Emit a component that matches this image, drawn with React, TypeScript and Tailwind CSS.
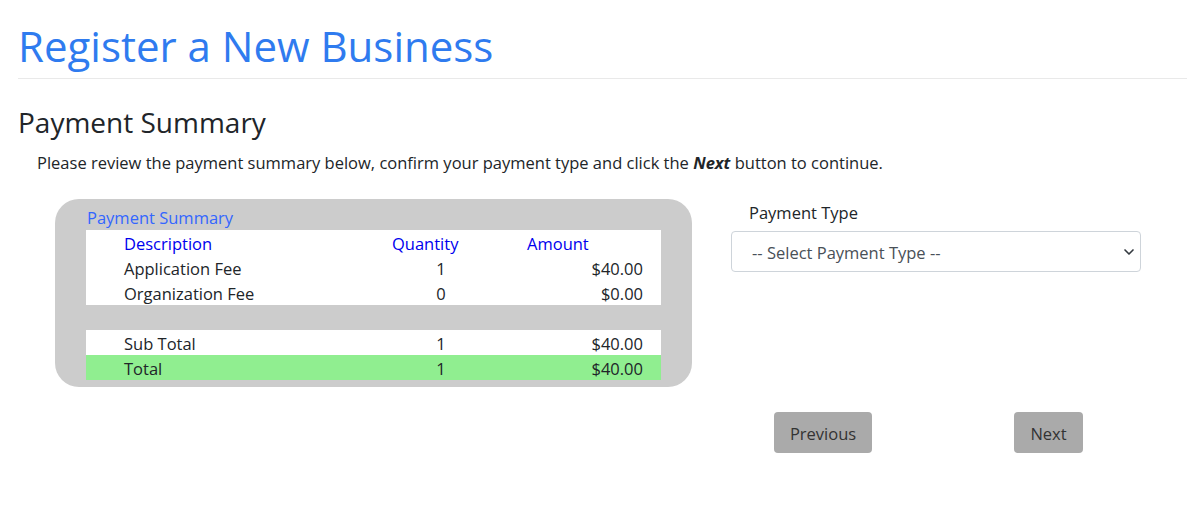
import { ChevronDown } from 'lucide-react';

type Line = { label: string; qty: string; amount: string };

const fees: Line[] = [
  { label: 'Application Fee', qty: '1', amount: '$40.00' },
  { label: 'Organization Fee', qty: '0', amount: '$0.00' },
];

function Row({ line, className = '' }: { line: Line; className?: string }) {
  return (
    <div className={`flex h-[25px] items-center pt-[3px] pl-[38px] ${className}`}>
      <span className="w-[268px]">{line.label}</span>
      <span className="w-[98px] text-center">{line.qty}</span>
      <span className="w-[37px]" />
      <span className="w-[116px] text-right">{line.amount}</span>
    </div>
  );
}

export default function App() {
  return (
    <div
      className="min-h-[516px] bg-white px-[18px] text-[16.5px] text-[#212529]"
      style={{ fontFamily: '"Open Sans", "Noto Sans", Arial, sans-serif' }}
    >
      <h1 className="pt-[22px] pb-[2px] text-[42px] leading-[48px] text-[#2f7bef]">Register a New Business</h1>
      <hr className="mt-[6px] -mr-[18px] border-t border-[#e9e9e9]" />

      <h2 className="mt-[26px] text-[28px] leading-[34px]">Payment Summary</h2>
      <p className="mt-[12px] pl-[19px] leading-[24px]">
        Please review the payment summary below, confirm your payment type and click the{' '}
        <b>
          <i>Next</i>
        </b>{' '}
        button to continue.
      </p>

      <div className="mt-[24px] flex items-start">
        <div className="ml-[37px] w-[637px] rounded-[24px] bg-[#cccccc] px-[31px] pt-[7px] pb-[7px]">
          <div className="pl-[1px] leading-[24px] text-[#3366ff]">Payment Summary</div>
          <div className="bg-white">
            <div className="flex h-[25px] items-center pt-[3px] pl-[38px] text-[#0000ee]">
              <span className="w-[268px]">Description</span>
              <span className="w-[135px]">Quantity</span>
              <span className="w-[116px]">Amount</span>
            </div>
            {fees.map((f) => (
              <Row key={f.label} line={f} />
            ))}
          </div>
          <div className="h-[25px]" />
          <Row line={{ label: 'Sub Total', qty: '1', amount: '$40.00' }} className="bg-white" />
          <Row line={{ label: 'Total', qty: '1', amount: '$40.00' }} className="bg-[#90ee90]" />
        </div>

        <div className="ml-[39px] w-[410px]">
          <label className="block pt-[2px] pl-[18px] leading-[24px]">Payment Type</label>
          <div className="mt-[6px] flex h-[41px] items-center justify-between rounded-[4px] border border-[#ced4da] pr-[3px] pl-[20px] text-[#495057]">
            <span className="pt-[3px]">-- Select Payment Type --</span>
            <ChevronDown className="h-[16px] w-[16px] text-[#343a40]" strokeWidth={2.5} />
          </div>
          <div className="mt-[140px] flex">
            <button className="ml-[43px] h-[41px] w-[98px] rounded-[4px] bg-[#aaaaaa] pt-[3px] text-[#333]">Previous</button>
            <button className="ml-[142px] h-[41px] w-[69px] rounded-[4px] bg-[#aaaaaa] pt-[3px] text-[#333]">Next</button>
          </div>
        </div>
      </div>
    </div>
  );
}
